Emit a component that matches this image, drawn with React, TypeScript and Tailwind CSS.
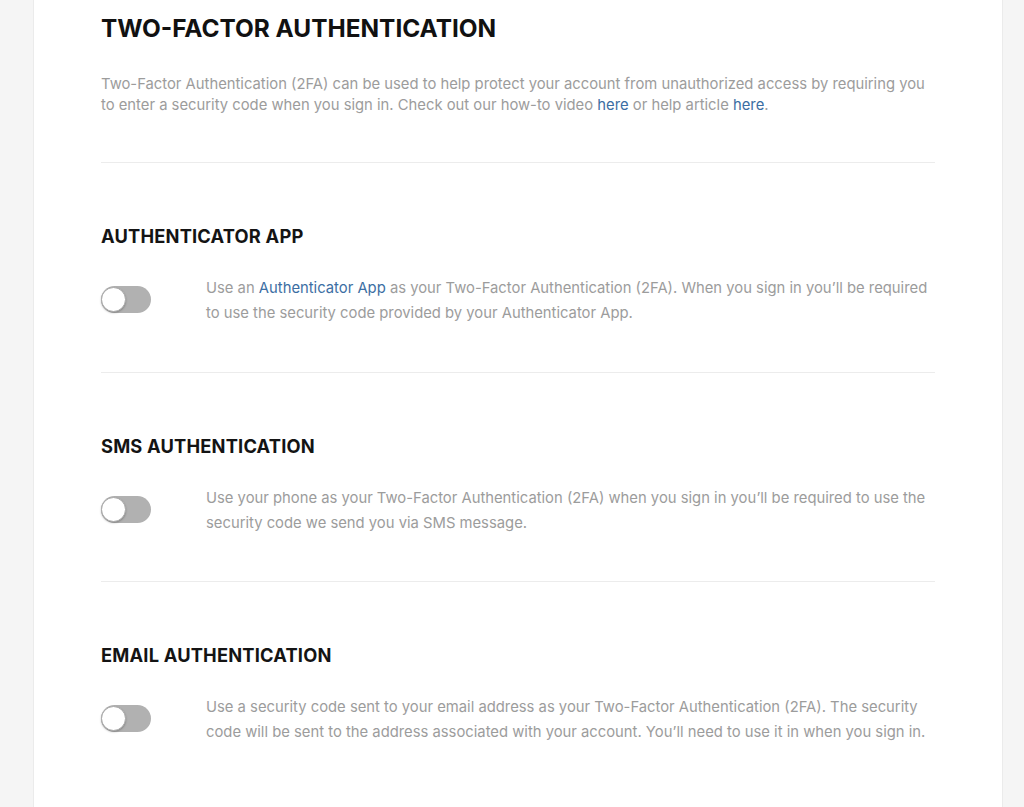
import React from "react";

function Toggle() {
  return (
    <div className="relative mt-[10px] h-[27px] w-[50px] shrink-0 rounded-full bg-[#b1b1b1]">
      <div className="absolute left-0 top-[1px] h-[25px] w-[25px] rounded-full border border-[#a8a8a8] bg-white shadow-[0_1px_2px_rgba(0,0,0,0.25)]" />
    </div>
  );
}

function Section({
  title,
  children,
  last,
}: {
  title: string;
  children: React.ReactNode;
  last?: boolean;
}) {
  return (
    <section className={last ? "pb-[60px]" : "border-b border-[#ececec] pb-[45.5px]"}>
      <h2 className="mt-[59px] text-[18.3px] font-bold leading-[28px] tracking-[0.01em] text-[#141414]">
        {title}
      </h2>
      <div className="mt-[26px] flex items-start">
        <Toggle />
        <p className="ml-[55px] whitespace-nowrap text-[14.8px] leading-[25px] text-[#9c9c9c]">
          {children}
        </p>
      </div>
    </section>
  );
}

export default function App() {
  return (
    <div
      className="min-h-[807px] bg-[#f5f5f5] pl-[33px] pr-[21px]"
      style={{ fontFamily: "Inter, 'Noto Sans', sans-serif" }}
    >
      <div className="min-h-[807px] border-x border-[#ebebeb] bg-white px-[67px] pt-[12px]">
        <h1 className="text-[24.4px] font-bold leading-[32px] text-[#111]">
          TWO-FACTOR AUTHENTICATION
        </h1>
        <div className="border-b border-[#ececec] pb-[46px]">
          <p className="mt-[30px] whitespace-nowrap text-[14.8px] leading-[21px] text-[#9c9c9c]">
            Two-Factor Authentication (2FA) can be used to help protect your account from unauthorized access by requiring you
            <br />
            to enter a security code when you sign in. Check out our how-to video{" "}
            <a className="text-[#3c6ea3]">here</a> or help article{" "}
            <a className="text-[#3c6ea3]">here</a>.
          </p>
        </div>
        <Section title="AUTHENTICATOR APP">
          Use an <a className="text-[#3c6ea3]">Authenticator App</a> as your Two-Factor Authentication (2FA). When you sign in you’ll be required
          <br />
          to use the security code provided by your Authenticator App.
        </Section>
        <Section title="SMS AUTHENTICATION">
          Use your phone as your Two-Factor Authentication (2FA) when you sign in you’ll be required to use the
          <br />
          security code we send you via SMS message.
        </Section>
        <Section title="EMAIL AUTHENTICATION" last>
          Use a security code sent to your email address as your Two-Factor Authentication (2FA). The security
          <br />
          code will be sent to the address associated with your account. You’ll need to use it in when you sign in.
        </Section>
      </div>
    </div>
  );
}
